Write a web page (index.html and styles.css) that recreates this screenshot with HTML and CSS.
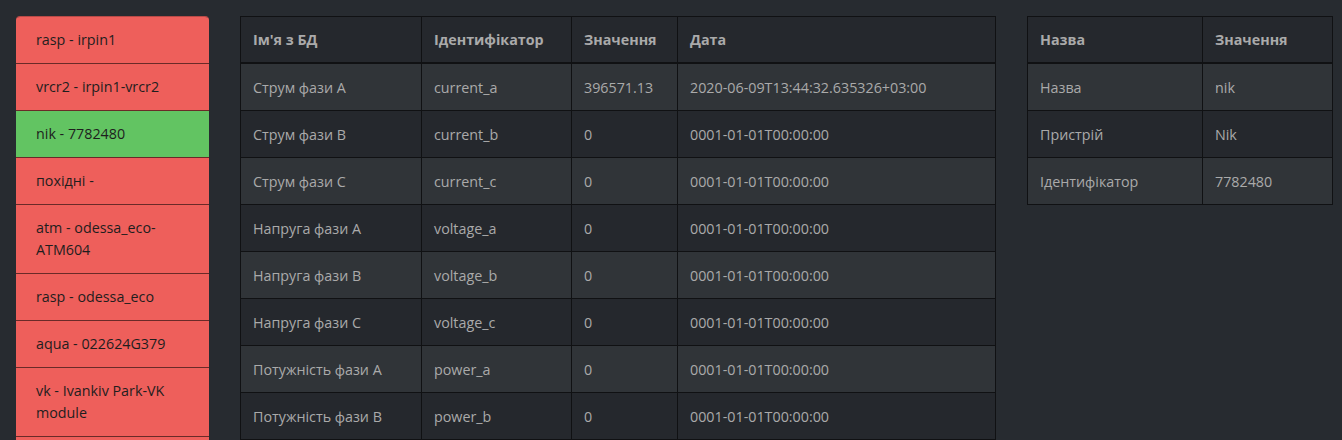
FILE: index.html
```html
<!DOCTYPE html>
<html lang="uk">
<head>
<meta charset="utf-8">
<title>Devices</title>
<link rel="stylesheet" href="styles.css">
</head>
<body>
<div class="layout">
  <ul class="devices">
    <li class="dev bad">rasp - irpin1</li>
    <li class="dev bad">vrcr2 - irpin1-vrcr2</li>
    <li class="dev ok">nik - 7782480</li>
    <li class="dev bad">похідні -</li>
    <li class="dev bad">atm - odessa_eco-ATM604</li>
    <li class="dev bad">rasp - odessa_eco</li>
    <li class="dev bad">aqua - 022624G379</li>
    <li class="dev bad">vk - Ivankiv Park-VK module</li>
    <li class="dev bad more"></li>
  </ul>
  <div class="main">
    <table class="tbl values">
      <thead>
        <tr><th class="c1">Ім'я з БД</th><th class="c2">Ідентифікатор</th><th class="c3">Значення</th><th>Дата</th></tr>
      </thead>
      <tbody>
        <tr><td>Струм фази A</td><td>current_a</td><td>396571.13</td><td>2020-06-09T13:44:32.635326+03:00</td></tr>
        <tr><td>Струм фази B</td><td>current_b</td><td>0</td><td>0001-01-01T00:00:00</td></tr>
        <tr><td>Струм фази C</td><td>current_c</td><td>0</td><td>0001-01-01T00:00:00</td></tr>
        <tr><td>Напруга фази A</td><td>voltage_a</td><td>0</td><td>0001-01-01T00:00:00</td></tr>
        <tr><td>Напруга фази B</td><td>voltage_b</td><td>0</td><td>0001-01-01T00:00:00</td></tr>
        <tr><td>Напруга фази C</td><td>voltage_c</td><td>0</td><td>0001-01-01T00:00:00</td></tr>
        <tr><td>Потужність фази A</td><td>power_a</td><td>0</td><td>0001-01-01T00:00:00</td></tr>
        <tr><td>Потужність фази B</td><td>power_b</td><td>0</td><td>0001-01-01T00:00:00</td></tr>
      </tbody>
    </table>
  </div>
  <div class="side">
    <table class="tbl info">
      <thead>
        <tr><th class="k1">Назва</th><th>Значення</th></tr>
      </thead>
      <tbody>
        <tr><td>Назва</td><td>nik</td></tr>
        <tr><td>Пристрій</td><td>Nik</td></tr>
        <tr><td>Ідентифікатор</td><td>7782480</td></tr>
      </tbody>
    </table>
  </div>
</div>
</body>
</html>
```

FILE: styles.css
```css
* { box-sizing: border-box; }
html, body { margin: 0; padding: 0; }
body {
  background: #272b30;
  color: #aaaaaa;
  font-family: "Open Sans", "Noto Sans", "Liberation Sans", sans-serif;
  font-size: 14.3px;
  line-height: 22px;
  overflow: hidden;
  height: 440px;
}
.layout {
  display: flex;
  align-items: flex-start;
  gap: 31px;
  padding: 16px 9px 0 16px;
}
.devices {
  list-style: none;
  margin: 0;
  padding: 0;
  width: 193px;
  flex: none;
  border-radius: 4px 4px 0 0;
  overflow: hidden;
  border-top: 1px solid #b84a47;
}
.dev {
  padding: 12px 20px;
  border-top: 1px solid #6a2a28;
  color: #1e1e1e;
}
.dev:first-child { border-top: 0; }
.dev.bad { background: #ee5f5b; }
.dev.ok { background: #62c462; }
.dev.more { height: 47px; }
.main { width: 756px; flex: none; }
.side { width: 306px; flex: none; }
.tbl {
  width: 100%;
  border-collapse: collapse;
  background: #25282d;
}
.tbl th, .tbl td {
  border: 1px solid #101113;
  padding: 12px 12px;
  text-align: left;
  vertical-align: top;
  white-space: nowrap;
}
.tbl th {
  font-weight: 700;
  color: #aaaaaa;
  border-bottom-width: 2px;
  padding-bottom: 11px;
}
.tbl td { padding-top: 13px; padding-bottom: 11px; }
.tbl tbody tr:nth-child(odd) { background: #303438; }
.values .c1 { width: 181px; }
.values .c2 { width: 150px; }
.values .c3 { width: 106px; }
.info .k1 { width: 175px; }
```
